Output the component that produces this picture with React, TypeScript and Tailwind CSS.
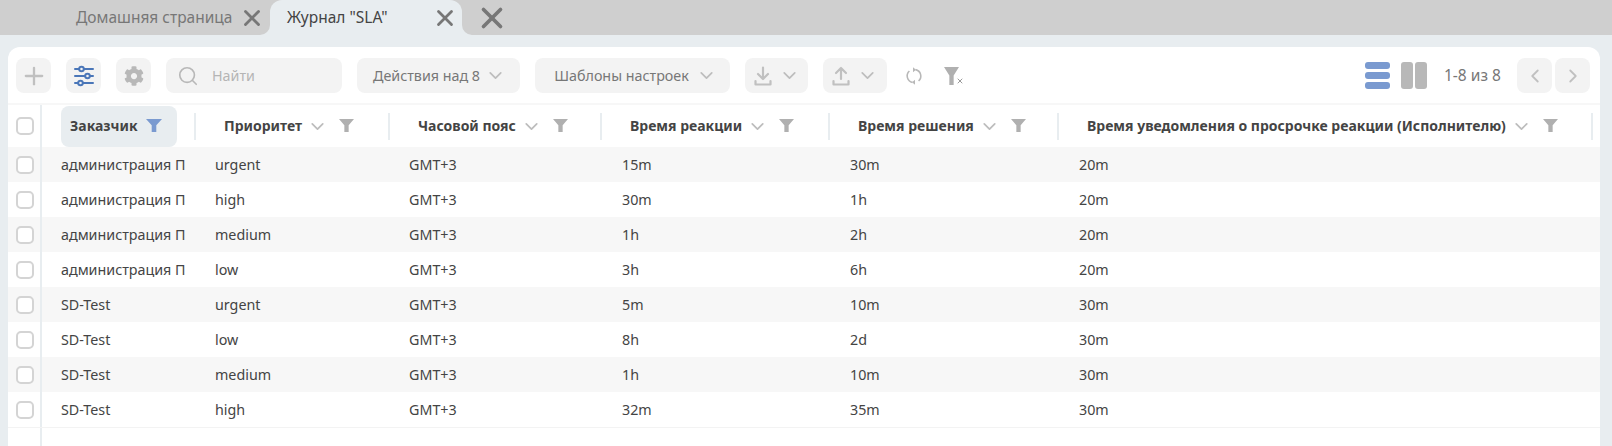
import { ChevronDown, ChevronLeft, ChevronRight, Plus, Search, X } from "lucide-react";
import { FaCog } from "react-icons/fa";

type Row = { customer: string; priority: string; zone: string; reaction: string; solution: string; notify: string };

const rows: Row[] = [
  { customer: "администрация П", priority: "urgent", zone: "GMT+3", reaction: "15m", solution: "30m", notify: "20m" },
  { customer: "администрация П", priority: "high", zone: "GMT+3", reaction: "30m", solution: "1h", notify: "20m" },
  { customer: "администрация П", priority: "medium", zone: "GMT+3", reaction: "1h", solution: "2h", notify: "20m" },
  { customer: "администрация П", priority: "low", zone: "GMT+3", reaction: "3h", solution: "6h", notify: "20m" },
  { customer: "SD-Test", priority: "urgent", zone: "GMT+3", reaction: "5m", solution: "10m", notify: "30m" },
  { customer: "SD-Test", priority: "low", zone: "GMT+3", reaction: "8h", solution: "2d", notify: "30m" },
  { customer: "SD-Test", priority: "medium", zone: "GMT+3", reaction: "1h", solution: "10m", notify: "30m" },
  { customer: "SD-Test", priority: "high", zone: "GMT+3", reaction: "32m", solution: "35m", notify: "30m" },
];

const gridCols = "grid grid-cols-[34px_152px_194px_212px_228px_229px_1fr]";
const toolBtn = "h-[35px] rounded-[8px] bg-[#f3f3f3] flex items-center justify-center";

function FilterIcon({ className }: { className: string }) {
  return (
    <svg viewBox="0 0 16 14" preserveAspectRatio="none" className={className} fill="currentColor">
      <path d="M0 0h16l-5.7 6.6V14H5.7V6.6z" />
    </svg>
  );
}

function Checkbox() {
  return <span className="block w-[18px] h-[18px] rounded-[5px] border-2 border-[#d4d4d4] bg-white" />;
}

function HeaderCell({ label }: { label: string }) {
  return (
    <div className="flex items-center h-full">
      <span className="w-[2px] h-[27px] bg-[#e8edf0] shrink-0" />
      <span className="ml-[28px] mb-[2px] text-[14px] font-bold text-[#444] whitespace-nowrap">{label}</span>
      <ChevronDown className="w-[21px] h-[21px] ml-[5px] text-[#bdbdbd] shrink-0" strokeWidth={2} />
      <FilterIcon className="w-[15px] h-[13px] ml-[11px] mb-[2px] text-[#b0b0b0] shrink-0" />
    </div>
  );
}

function SettingsIcon() {
  return (
    <svg viewBox="0 0 20 22" className="w-[20px] h-[22px]" fill="none" stroke="#4a76b8" strokeWidth="2" strokeLinecap="round">
      <path d="M1 4h4M10 4h9M1 11h10M16 11h3M1 18h3M9 18h10" />
      <circle cx="7.5" cy="4" r="2.3" />
      <circle cx="13.5" cy="11" r="2.3" />
      <circle cx="6.5" cy="18" r="2.3" />
    </svg>
  );
}

function DownloadIcon() {
  return (
    <svg viewBox="0 0 18 20" className="w-[18px] h-[20px]" fill="none" stroke="#c0c0c0" strokeWidth="2.2" strokeLinecap="round" strokeLinejoin="round">
      <path d="M9 1.5v11M4 8l5 5 5-5M1.5 15v3.5h15V15" />
    </svg>
  );
}

function UploadIcon() {
  return (
    <svg viewBox="0 0 18 20" className="w-[18px] h-[20px]" fill="none" stroke="#c0c0c0" strokeWidth="2.2" strokeLinecap="round" strokeLinejoin="round">
      <path d="M9 13V2M4 7l5-5 5 5M1.5 15v3.5h15V15" />
    </svg>
  );
}

function RefreshIcon() {
  return (
    <svg viewBox="0 0 18 18" className="block w-[18px] h-[18px]" fill="none" stroke="#b8b8b8" strokeWidth="1.6">
      <path d="M10.5 2.6A6.6 6.6 0 0 1 13.6 14M7.5 15.4A6.6 6.6 0 0 1 4.4 4" />
      <path d="M8 .2v5l3-2.5zM10 12.8v5l-3-2.5z" fill="#b8b8b8" stroke="none" />
    </svg>
  );
}

function Flare({ side }: { side: "left" | "right" }) {
  return (
    <svg viewBox="0 0 10 10" className={side === "left" ? "absolute bottom-0 -left-[10px] w-[10px] h-[10px]" : "absolute bottom-0 -right-[10px] w-[10px] h-[10px]"} fill="#e8edf0">
      {side === "left" ? <path d="M10 0v10H0a10 10 0 0 0 10-10z" /> : <path d="M0 0v10h10A10 10 0 0 1 0 0z" />}
    </svg>
  );
}

export default function App() {
  return (
    <div className="w-[1612px] h-[446px] overflow-hidden bg-[#e8edf0] flex flex-col font-['Noto_Sans',sans-serif]">
      {/* Вкладки */}
      <div className="h-[35px] bg-[#cfcfcf] flex items-center shrink-0 pl-[76px]">
        <span className="text-[15.5px] text-[#777] w-[157px] whitespace-nowrap">Домашняя страница</span>
        <X className="w-[26px] h-[26px] ml-[6px] text-[#777] shrink-0" strokeWidth={2.6} />
        <div className="relative h-full w-[192px] ml-[5px] bg-[#e8edf0] rounded-t-[12px] flex items-center pl-[17px]">
          <Flare side="left" />
          <span className="text-[15.5px] text-[#444]">Журнал "SLA"</span>
          <X className="w-[26px] h-[26px] ml-auto mr-[4px] text-[#777]" strokeWidth={2.6} />
          <Flare side="right" />
        </div>
        <X className="w-[34px] h-[34px] ml-[13px] text-[#777]" strokeWidth={2.6} />
      </div>

      {/* Карточка */}
      <div className="mt-[12px] ml-[8px] mr-[12px] bg-white rounded-t-[12px] flex-1 flex flex-col text-[#444]">
        <div className="h-[56px] flex items-center pl-[8px] pr-[10px] shrink-0 pt-[1px]">
          <button className={`${toolBtn} w-[35px]`}>
            <Plus className="w-[28px] h-[28px] text-[#c0c0c0]" strokeWidth={2} />
          </button>
          <button className={`${toolBtn} w-[35px] ml-[15px]`}>
            <SettingsIcon />
          </button>
          <button className={`${toolBtn} w-[35px] ml-[15px]`}>
            <FaCog className="w-[20px] h-[20px] text-[#b8b8b8]" />
          </button>
          <div className={`${toolBtn} w-[176px] ml-[15px] !justify-start pl-[11px]`}>
            <Search className="w-[22px] h-[22px] text-[#b8b8b8]" strokeWidth={1.8} />
            <span className="ml-[13px] text-[14.3px] text-[#b5b5b5]">Найти</span>
          </div>
          <button className={`${toolBtn} w-[163px] ml-[15px] pl-[2px]`}>
            <span className="text-[14.3px] text-[#777] whitespace-nowrap">Действия над 8</span>
            <ChevronDown className="w-[21px] h-[21px] ml-[5px] text-[#bdbdbd]" strokeWidth={2} />
          </button>
          <button className={`${toolBtn} w-[195px] ml-[15px] pl-[6px]`}>
            <span className="text-[14.3px] text-[#777] whitespace-nowrap">Шаблоны настроек</span>
            <ChevronDown className="w-[21px] h-[21px] ml-[7px] text-[#bdbdbd]" strokeWidth={2} />
          </button>
          <button className={`${toolBtn} w-[63px] ml-[15px]`}>
            <DownloadIcon />
            <ChevronDown className="w-[21px] h-[21px] ml-[7px] text-[#bdbdbd]" strokeWidth={2} />
          </button>
          <button className={`${toolBtn} w-[64px] ml-[15px]`}>
            <UploadIcon />
            <ChevronDown className="w-[21px] h-[21px] ml-[7px] text-[#bdbdbd]" strokeWidth={2} />
          </button>
          <span className="ml-[18px]">
            <RefreshIcon />
          </span>
          <span className="relative ml-[21px] block w-[20px] h-[18px]">
            <FilterIcon className="block w-[15px] h-[18px] text-[#b0b0b0]" />
            <X className="absolute right-0 bottom-0 w-[8px] h-[8px] text-[#999]" strokeWidth={3} />
          </span>

          <div className="ml-auto flex items-center">
            <span className="flex flex-col gap-[3px] w-[25px]">
              <span className="h-[7px] rounded-[3px] bg-[#7a9ad0]" />
              <span className="h-[7px] rounded-[3px] bg-[#7a9ad0]" />
              <span className="h-[7px] rounded-[3px] bg-[#7a9ad0]" />
            </span>
            <span className="flex gap-[2px] h-[27px] ml-[11px]">
              <span className="w-[12px] rounded-[3px] bg-[#b8b8b8]" />
              <span className="w-[12px] rounded-[3px] bg-[#b8b8b8]" />
            </span>
            <span className="ml-[17px] text-[15.5px] text-[#777] w-[58px] whitespace-nowrap">1-8 из 8</span>
            <button className={`${toolBtn} w-[35px] ml-[15px]`}>
              <ChevronLeft className="w-[22px] h-[22px] text-[#c0c0c0]" strokeWidth={2} />
            </button>
            <button className={`${toolBtn} w-[35px] ml-[3px]`}>
              <ChevronRight className="w-[22px] h-[22px] text-[#c0c0c0]" strokeWidth={2} />
            </button>
          </div>
        </div>

        <div className="h-[2px] bg-[#f7f7f7] shrink-0" />

        {/* Таблица */}
        <div className={`${gridCols} h-[42px] shrink-0`}>
          <div className="flex items-center pl-[8px] border-r-2 border-[#e8edf0]">
            <Checkbox />
          </div>
          <div className="flex items-center pl-[19px]">
            <div className="w-[116px] h-[41px] rounded-[8px] bg-[#e8edf0] flex items-center pl-[9px]">
              <span className="mb-[2px] text-[14px] font-bold text-[#444]">Заказчик</span>
              <FilterIcon className="w-[16px] h-[13px] ml-[8px] mb-[2px] text-[#7a9ad0]" />
            </div>
          </div>
          <HeaderCell label="Приоритет" />
          <HeaderCell label="Часовой пояс" />
          <HeaderCell label="Время реакции" />
          <HeaderCell label="Время решения" />
          <div className="flex items-center justify-between pr-[7px]">
            <HeaderCell label="Время уведомления о просрочке реакции (Исполнителю)" />
            <span className="w-[2px] h-[27px] bg-[#e8edf0]" />
          </div>
        </div>

        {rows.map((row, i) => (
          <div key={i} className={`${gridCols} h-[35px] shrink-0 items-center text-[14.3px] text-[#444] ${i % 2 === 0 ? "bg-[#f7f7f7]" : "bg-white"}`}>
            <div className="h-full flex items-center pl-[8px] border-r-2 border-[#e8edf0]">
              <Checkbox />
            </div>
            <div className="pl-[19px] whitespace-nowrap overflow-hidden">{row.customer}</div>
            <div className="pl-[21px]">{row.priority}</div>
            <div className="pl-[21px]">{row.zone}</div>
            <div className="pl-[22px]">{row.reaction}</div>
            <div className="pl-[22px]">{row.solution}</div>
            <div className="pl-[22px]">{row.notify}</div>
          </div>
        ))}

        <div className="flex-1 border-t border-[#f3f3f3] flex">
          <div className="w-[34px] border-r-2 border-[#e8edf0]" />
        </div>
      </div>
    </div>
  );
}
